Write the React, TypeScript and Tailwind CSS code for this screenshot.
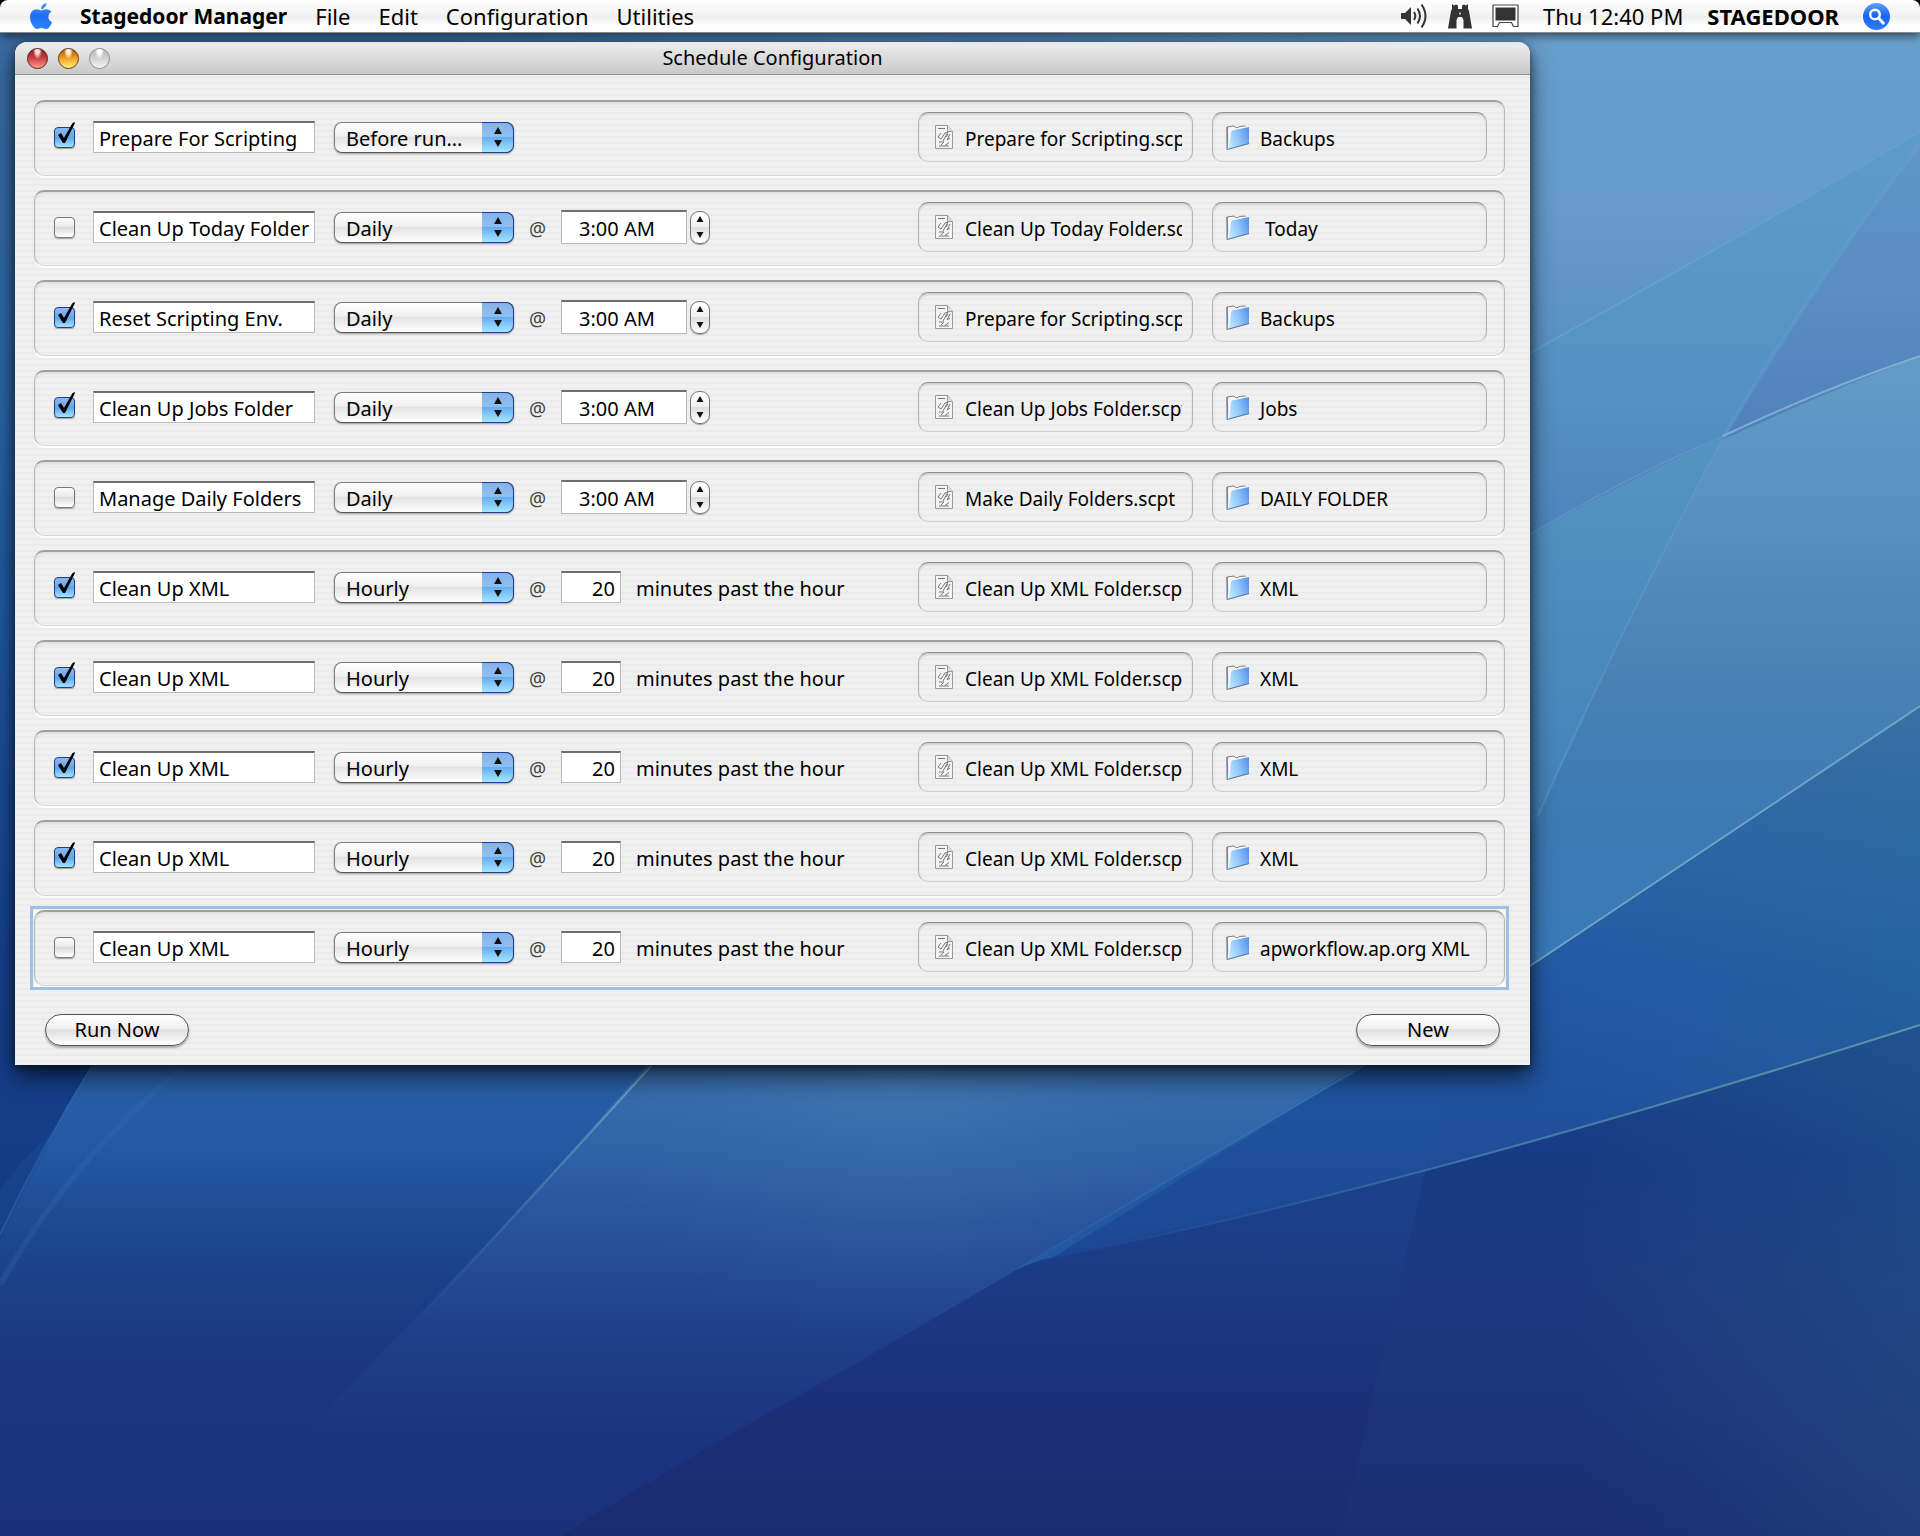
import { FaApple } from "react-icons/fa";

type Job = {
  enabled: boolean;
  name: string;
  when: "Before run…" | "Daily" | "Hourly";
  script: string;
  folder: string;
  indent?: boolean;
  focused?: boolean;
};

const jobs: ReadonlyArray<Job> = [
  { enabled: true, name: "Prepare For Scripting", when: "Before run…", script: "Prepare for Scripting.scpt", folder: "Backups" },
  { enabled: false, name: "Clean Up Today Folder", when: "Daily", script: "Clean Up Today Folder.scpt", folder: "Today", indent: true },
  { enabled: true, name: "Reset Scripting Env.", when: "Daily", script: "Prepare for Scripting.scpt", folder: "Backups" },
  { enabled: true, name: "Clean Up Jobs Folder", when: "Daily", script: "Clean Up Jobs Folder.scpt", folder: "Jobs" },
  { enabled: false, name: "Manage Daily Folders", when: "Daily", script: "Make Daily Folders.scpt", folder: "DAILY FOLDER" },
  { enabled: true, name: "Clean Up XML", when: "Hourly", script: "Clean Up XML Folder.scpt", folder: "XML" },
  { enabled: true, name: "Clean Up XML", when: "Hourly", script: "Clean Up XML Folder.scpt", folder: "XML" },
  { enabled: true, name: "Clean Up XML", when: "Hourly", script: "Clean Up XML Folder.scpt", folder: "XML" },
  { enabled: true, name: "Clean Up XML", when: "Hourly", script: "Clean Up XML Folder.scpt", folder: "XML" },
  { enabled: false, name: "Clean Up XML", when: "Hourly", script: "Clean Up XML Folder.scpt", folder: "apworkflow.ap.org XML", focused: true },
];

const menus = ["File", "Edit", "Configuration", "Utilities"];

// Vertical fades of the wallpaper: id, start y, end y, colour stops
const fades: ReadonlyArray<[string, number, number, string[]]> = [
  ["sky", 30, 540, ["#689fcc", "#669bca", "#5b8fc3", "#4f84bd"]],
  ["veil", 130, 540, ["#5f9bc8", "#5a97c6", "#5490c2", "#4f84bd"]],
  ["veilRight", 130, 440, ["#6096c8", "#5b8ec4", "#4f80bc"]],
  ["band", 356, 970, ["#619dc7", "#5892c0", "#4a83b4", "#3d7ab4", "#3a7aba"]],
  ["bandLeft", 430, 830, ["#5495c1", "#4c8bbd", "#4280b8"]],
  ["slope", 700, 1260, ["#3c6eaa", "#2c64a5", "#2259a4", "#20509c", "#1d448f"]],
  ["floor", 1030, 1536, ["#2459a0", "#1b438d", "#1c3a86", "#1c2f78", "#1b2b70"]],
  ["floorRight", 1030, 1536, ["#1c478c", "#173a85", "#1c397f", "#1d347a", "#1b2c72"]],
  ["left", 1050, 1536, ["#2a63ac", "#2458a2", "#1c468f", "#1b3883", "#1b347f", "#1b307a"]],
  ["middle", 1050, 1536, ["#3a72b0", "#3063a8", "#274f9a", "#1e3e8a", "#1b3480", "#1b307a"]],
  ["edge", 30, 1200, ["#3a6ba2", "#2f67a5", "#20569f", "#16438e", "#143a85"]],
];

function Wallpaper() {
  return (
    <svg
      className="absolute inset-0 h-full w-full"
      viewBox="0 0 1920 1536"
      preserveAspectRatio="xMidYMid slice"
      fill="none"
      aria-hidden="true"
    >
      <defs>
        {fades.map(([id, y1, y2, stops]) => (
          <linearGradient key={id} id={id} gradientUnits="userSpaceOnUse" x1="0" x2="0" y1={y1} y2={y2}>
            {stops.map((color, i) => (
              <stop key={i} offset={i / (stops.length - 1)} stopColor={color} />
            ))}
          </linearGradient>
        ))}
        <linearGradient id="strip" x1="0" x2="1" y1="0" y2="0">
          <stop offset=".14" stopColor="#3a6ba2" />
          <stop offset="1" stopColor="#3a6ba2" stopOpacity="0" />
        </linearGradient>
        <linearGradient id="ridge" gradientUnits="userSpaceOnUse" x1="1363" y1="1066" x2="900" y2="1340">
          <stop offset="0" stopColor="#3f97cf" stopOpacity=".6" />
          <stop offset="1" stopColor="#2c62b4" stopOpacity="0" />
        </linearGradient>
        <linearGradient id="crest" gradientUnits="userSpaceOnUse" x1="1920" y1="1020" x2="1041" y2="1260">
          <stop offset="0" stopColor="#5f97a8" />
          <stop offset=".5" stopColor="#3f76a6" />
          <stop offset="1" stopColor="#2558a2" stopOpacity="0" />
        </linearGradient>
        <linearGradient id="thread" gradientUnits="userSpaceOnUse" x1="651" y1="1066" x2="400" y2="1330">
          <stop offset="0" stopColor="#7fb5c5" stopOpacity=".8" />
          <stop offset=".5" stopColor="#4a7fb4" stopOpacity=".6" />
          <stop offset="1" stopColor="#2a559f" stopOpacity="0" />
        </linearGradient>
        <linearGradient id="teal" x1="0" x2="1" y1="0" y2="0">
          <stop offset=".3" stopColor="#2f7a94" stopOpacity="0" />
          <stop offset="1" stopColor="#2f7a94" stopOpacity=".22" />
        </linearGradient>
        <radialGradient id="glow" gradientUnits="userSpaceOnUse" cx="900" cy="1040" r="320">
          <stop offset="0" stopColor="#5a8fb4" stopOpacity=".3" />
          <stop offset="1" stopColor="#3a6fb0" stopOpacity="0" />
        </radialGradient>
      </defs>

      <path fill="#2459a0" d="M0 0h1920v1536H0z" />
      <path fill="url(#edge)" d="M0 0h200v1300H0z" />
      <path fill="url(#sky)" d="M200 0h1720v700H200z" />
      <path fill="url(#strip)" d="M200 0h1300v60H200z" />
      <path fill="url(#veil)" d="M1500 370Q1720 246 1920 131V800H1500z" />
      <path fill="url(#veilRight)" d="M1920 145Q1830 258 1723 438L1920 380z" />
      <path fill="url(#band)" d="M1480 560Q1723 432 1920 356V1100H1480z" />
      <path fill="url(#bandLeft)" d="M1480 560Q1610 490 1723 437Q1620 630 1538 816L1480 900z" />
      <path fill="url(#slope)" d="M1920 706Q1723 838 1530 966L1363 1066L1000 1290L1200 1400L1920 1200z" />
      <path fill="url(#floor)" d="M1920 1025Q1400 1190 1041 1260L780 1360L400 1536H1920z" />
      <path fill="url(#floorRight)" d="M1920 1025Q1660 1108 1426 1169L1340 1536H1920z" />
      <path fill="url(#left)" d="M0 1240Q40 1150 92 1064H651Q520 1210 306 1440L220 1536H0z" />
      <path
        fill="url(#middle)"
        d="M651 1060H1370Q1050 1250 857 1363Q700 1450 560 1536H200Q480 1260 651 1060z"
      />
      <path fill="url(#glow)" d="M651 1060H1370Q1050 1250 857 1363L500 1330Q580 1150 651 1060z" />
      <path fill="#1b59a8" opacity=".15" d="M1451 1066L1426 1168L1041 1260L1363 1066z" />
      <path fill="url(#teal)" d="M1426 1036L1530 966Q1723 838 1920 706V1536H1426z" />
      <path fill="#194a93" opacity=".6" d="M0 1190Q30 1150 55 1130L0 1240z" />

      <path stroke="#64a7d0" strokeOpacity=".7" strokeWidth="2" d="M1530 353Q1730 242 1920 132" />
      <path stroke="#6aa5d2" strokeOpacity=".3" strokeWidth="4" d="M1920 145Q1830 258 1723 438" />
      <path stroke="#67a3cd" strokeOpacity=".4" strokeWidth="2" d="M1723 438Q1620 630 1538 816" />
      <path stroke="#8cb8d6" strokeOpacity=".8" strokeWidth="2" d="M1723 436Q1820 390 1920 356" />
      <path stroke="#6aa3ce" strokeOpacity=".7" strokeWidth="1" d="M1530 534Q1630 475 1723 436" />
      <path stroke="#6ea6c4" strokeWidth="2" d="M1530 966Q1723 838 1920 706" />
      <path stroke="url(#ridge)" strokeWidth="2" d="M1370 1062Q1050 1250 857 1363" />
      <path stroke="url(#crest)" strokeWidth="2" d="M1920 1025Q1400 1190 1041 1260" />
      <path stroke="url(#thread)" strokeWidth="2" d="M651 1066Q480 1255 306 1440" />
      <path stroke="#3c77ba" strokeOpacity=".2" strokeWidth="6" d="M184 1066Q70 1160 0 1285" />
      <path stroke="#3b73b8" strokeOpacity=".4" strokeWidth="2" d="M92 1066Q40 1150 0 1235" />
    </svg>
  );
}

function SpeakerIcon() {
  return (
    <svg viewBox="0 0 27 26" className="h-[26px] w-[27px]" fill="none" stroke="#333" strokeWidth="2" aria-hidden="true">
      <path d="M0 10h4l6-6v18l-6-6H0z" fill="#333" stroke="none" />
      <path d="M13 9q2.600 4 0 8M16.500 5.500q5 7.500 0 15M20.500 1.500q8 11.500 0 23" />
    </svg>
  );
}

function BinocularsIcon() {
  return (
    <svg viewBox="0 0 24 25" className="h-[25px] w-6" fill="#333" aria-hidden="true">
      <path d="M4 0l2 1.500L8 .500l2 1V5h4V1.500l2-1 2 1L20 0v5l1 2 3 17.500h-8.500V16l-1.500-3h-4l-1.500 3v8.500H0L3 7l1-2z" />
      <path d="M11 8.500h2v2h-2z" fill="#bbb" />
    </svg>
  );
}

function DisplayIcon() {
  return (
    <svg viewBox="0 0 27 24" className="h-6 w-[27px]" aria-hidden="true">
      <path
        d="M1 1h25v21.500h-4.500l-2-4h-12l-2 4H1z"
        fill="#fff"
        stroke="#444"
        strokeWidth="1.200"
      />
      <path d="M3.500 3.500h20v13h-20z" fill="#333" />
    </svg>
  );
}

function SearchIcon() {
  return (
    <svg viewBox="0 0 27 27" className="h-[27px] w-[27px]" fill="none" aria-hidden="true">
      <defs>
        <linearGradient id="lens" x1="0" x2="0" y1="0" y2="1">
          <stop offset="0" stopColor="#5aa2ff" />
          <stop offset=".5" stopColor="#1a62f5" />
          <stop offset="1" stopColor="#2f7cff" />
        </linearGradient>
      </defs>
      <circle cx="13.500" cy="13.500" r="13.500" fill="url(#lens)" />
      <circle cx="12" cy="11.500" r="4.800" stroke="#fff" strokeWidth="2.400" />
      <path d="M15.500 15l4.800 5.200" stroke="#fff" strokeWidth="3" strokeLinecap="round" />
    </svg>
  );
}

function ScriptIcon() {
  return (
    <svg viewBox="0 0 18 24" className="h-6 w-[18px] shrink-0" fill="none" stroke="#777" aria-hidden="true">
      <path d="M.5.500h12l5 6v17H.5z" fill="#f4f4f4" stroke="#999" />
      <path d="M12.500.500v6h5" fill="#ddd" stroke="#999" />
      <path d="M3 3.500h7M6 8l-3 4 3 2 4-6 3-1-5 9M15 9l-3 6 3-2M4 17h5l-3 3M10 20.500l4-3M4 21h10M11 12l2-3" />
    </svg>
  );
}

function FolderIcon() {
  return (
    <svg viewBox="0 0 24 25" className="h-[25px] w-6 shrink-0" aria-hidden="true">
      <defs>
        <linearGradient id="folder" x1="0" x2="1" y1=".7" y2=".3">
          <stop offset="0" stopColor="#bfeaff" />
          <stop offset=".5" stopColor="#8fc6fb" />
          <stop offset="1" stopColor="#5b96e8" />
        </linearGradient>
      </defs>
      <path d="M1 2l7-1 2 2 4-1.500 5-.5 1 2v14L2 23z" fill="#f4f4f4" stroke="#8a8078" />
      <path d="M4.500 7q0-1.500 1.500-2L23 1.500v17.500L2 24.500z" fill="url(#folder)" />
      <path d="M2 24.500L4.500 7q0-1.500 1.500-2L23 1.500" fill="none" stroke="#fff" />
      <path d="M1 2v22.500l22-6" fill="none" stroke="#5d6f96" />
    </svg>
  );
}

function Arrows() {
  return (
    <svg viewBox="0 0 10 20" className="h-5 w-[10px]" fill="#111" aria-hidden="true">
      <path d="M5 0l4 7H1zM5 20l4-7H1z" />
    </svg>
  );
}

function MenuBar() {
  return (
    <header className="relative z-10 bg-black text-[22px]">
      <div className="flex h-[33px] items-center justify-between rounded-t-lg border-b border-[#8b8b8b] bg-[linear-gradient(#fff,#f3f3f3_48%,#ececec_50%,#fff_80%)] pr-[30px] pl-[26px] shadow-[0_3px_10px_rgba(0,0,0,0.55)]">
        <nav className="flex items-center gap-7">
          <svg className="absolute h-0 w-0" aria-hidden="true">
            <linearGradient id="aqua" x1="0" x2="0" y1="0" y2="1">
              <stop offset="0" stopColor="#4f9bff" />
              <stop offset=".5" stopColor="#1d6cf6" />
              <stop offset="1" stopColor="#2c86ff" />
            </linearGradient>
          </svg>
          <a href="#apple" aria-label="Apple menu" className="-mr-1">
            <FaApple size={30} fill="url(#aqua)" />
          </a>
          <a href="#app" className="text-[21px] font-bold">
            Stagedoor Manager
          </a>
          {menus.map((menu) => (
            <a key={menu} href={`#${menu.toLowerCase()}`}>
              {menu}
            </a>
          ))}
        </nav>
        <div className="flex items-center gap-6">
          <div className="flex items-center gap-5">
            <SpeakerIcon />
            <BinocularsIcon />
            <DisplayIcon />
          </div>
          <span>Thu 12:40 PM</span>
          <a href="#user" className="font-bold">
            STAGEDOOR
          </a>
          <button type="button" aria-label="Search">
            <SearchIcon />
          </button>
        </div>
      </div>
    </header>
  );
}

function TitleBar() {
  return (
    <div className="grid h-[33px] grid-cols-[1fr_auto_1fr] items-center rounded-t-xl border-b border-[#8f8f8f] bg-[linear-gradient(#f2f2f2,#e2e2e2_30%,#c9c9c9)] px-3">
      <div className="flex gap-[10px]">
        <button
          type="button"
          aria-label="Close"
          className="size-[21px] rounded-full border border-[#5d1a1a] bg-[radial-gradient(ellipse_at_50%_10%,#f8d8d8_0_14%,transparent_34%),linear-gradient(#7d1d1d,#c93a3a_45%,#ff9b91)]"
        />
        <button
          type="button"
          aria-label="Minimize"
          className="size-[21px] rounded-full border border-[#6b3a10] bg-[radial-gradient(ellipse_at_50%_10%,#fff0d0_0_14%,transparent_34%),linear-gradient(#a34a10,#f09a20_45%,#fff27a)]"
        />
        <button
          type="button"
          aria-label="Zoom"
          className="size-[21px] rounded-full border border-[#8d8d8d] bg-[radial-gradient(ellipse_at_50%_10%,#fff_0_14%,transparent_34%),linear-gradient(#b5b5b5,#cfcfcf_45%,#f4f4f4)]"
        />
      </div>
      <h1>Schedule Configuration</h1>
    </div>
  );
}

const field =
  "border border-[#b9b9b9] border-t-2 border-t-[#6e6e6e] bg-white pt-0.5 outline-none";

const well =
  "flex h-[50px] w-[275px] shrink-0 items-center rounded-[10px] border border-[#b4b4b4] border-t-[#8f8f8f] border-b-[#cfcfcf] text-[19px] shadow-[inset_0_2px_2px_rgba(0,0,0,0.12)]";

function JobRow({ job, index }: { job: Job; index: number }) {
  return (
    <li
      className={
        job.focused
          ? "bg-white/80 shadow-[0_2px_0_#fff] outline-3 outline-offset-1 outline-[#9fc1e8]"
          : "rounded-[10px] shadow-[0_2px_0_#fcfcfc]"
      }
    >
      <div className="flex items-center rounded-[10px] border border-[#b8b8b8] border-t-2 border-t-[#a0a0a0] border-b-[#d6d6d6] bg-[repeating-linear-gradient(#f0f0f0_0_4px,#ebebeb_4px_6px)] pt-[10px] pr-[17px] pb-[13px] pl-[19px] shadow-[inset_0_2px_3px_rgba(0,0,0,0.08)]">
        <span className="relative mr-[18px] size-[21px] shrink-0">
          <input
            type="checkbox"
            defaultChecked={job.enabled}
            aria-label={`Enable ${job.name}`}
            className="peer block size-[21px] appearance-none rounded-sm border border-[#777] bg-[linear-gradient(#fdfdfd,#e9e9e9_48%,#dcdcdc_50%,#fff)] shadow-[0_1px_1px_rgba(0,0,0,0.3)] checked:border-[#1c3f8f] checked:bg-[linear-gradient(#8db9ee,#6ba8ec_48%,#5aa4ee_50%,#a8e4ff)]"
          />
          <svg
            viewBox="0 0 21 24"
            className="pointer-events-none absolute bottom-[2px] left-0 hidden h-6 w-[21px] peer-checked:block"
            aria-hidden="true"
          >
            <path d="M4 13l3-2 3 5L18.500 1l3-1L11 21H9z" fill="#000" />
          </svg>
        </span>
        <input
          type="text"
          defaultValue={job.name}
          aria-label={`Name of job ${index + 1}`}
          className={`${field} mr-[19px] h-8 w-[222px] shrink-0 pl-[5px]`}
        />
        <span className="relative flex shrink-0">
          <select
            defaultValue={job.when}
            aria-label={`Frequency of job ${index + 1}`}
            className="h-[31px] w-[180px] appearance-none rounded-lg border border-[#7c7c7c] border-b-[#555] bg-[linear-gradient(#fff,#f0f0f0_45%,#e3e3e3_50%,#fff)] pt-1 pl-[11px] shadow-[0_1px_2px_rgba(0,0,0,0.35)] outline-none"
          >
            <option>Before run…</option>
            <option>Daily</option>
            <option>Hourly</option>
          </select>
          <span className="pointer-events-none absolute inset-y-0 right-0 flex w-8 items-center justify-center rounded-r-lg border border-l-0 border-[#1d3f8e] bg-[linear-gradient(#86b1e8,#8fc0f2_46%,#66aef2_50%,#a5e6ff)]">
            <Arrows />
          </span>
        </span>
        {job.when !== "Before run…" && <span className="mx-[15px] w-[17px] pt-1 text-[19px] text-[#444]">@</span>}
        {job.when === "Daily" && (
          <>
            <input
              type="text"
              defaultValue="3:00 AM"
              aria-label={`Time of job ${index + 1}`}
              className={`${field} mr-[3px] h-[34px] w-[126px] shrink-0 pl-[17px]`}
            />
            <button
              type="button"
              aria-label="Change time"
              className="flex h-[33px] w-5 shrink-0 items-center justify-center rounded-[9px] border border-[#777] bg-[linear-gradient(#fff,#f0f0f0_48%,#dedede_50%,#fff)] shadow-[0_1px_1px_rgba(0,0,0,0.3)]"
            >
              <svg viewBox="0 0 8 22" className="h-[22px] w-2" fill="#111" aria-hidden="true">
                <path d="M4 0l3.500 6h-7zM4 22l3.500-6h-7z" />
              </svg>
            </button>
          </>
        )}
        {job.when === "Hourly" && (
          <label className="flex items-center gap-[15px] whitespace-nowrap">
            <input
              type="text"
              defaultValue="20"
              className={`${field} h-8 w-[60px] pr-[5px] text-right`}
            />
            <span className="pt-1">minutes past the hour</span>
          </label>
        )}
        <div className="ml-auto flex gap-[19px]">
          <div className={`${well} gap-3 pr-[10px] pl-4`}>
            <ScriptIcon />
            <span className="min-w-0 flex-1 overflow-hidden pt-1 whitespace-nowrap">{job.script}</span>
          </div>
          <div className={`${well} gap-[10px] pr-[10px] pl-[13px]`}>
            <FolderIcon />
            <span className={job.indent ? "pt-1 pl-[5px] whitespace-nowrap" : "pt-1 whitespace-nowrap"}>
              {job.folder}
            </span>
          </div>
        </div>
      </div>
    </li>
  );
}

function PushButton({ label }: { label: string }) {
  return (
    <button
      type="button"
      className="h-8 w-36 rounded-full border border-[#555] bg-[linear-gradient(#fff,#f0f0f0_45%,#dfdfdf_50%,#fff)] shadow-[0_2px_2px_rgba(0,0,0,0.3)]"
    >
      {label}
    </button>
  );
}

export default function App() {
  return (
    <div className="relative min-h-screen overflow-hidden font-['Noto_Sans',sans-serif] text-[20px] leading-6 text-black">
      <Wallpaper />
      <MenuBar />
      <main className="relative pt-[9px] pr-[390px] pl-[15px]">
        <section className="rounded-t-xl bg-[repeating-linear-gradient(#f0f0f0_0_4px,#ebebeb_4px_6px)] shadow-[0_12px_24px_rgba(0,0,0,0.6),0_2px_8px_rgba(0,0,0,0.5)]">
          <TitleBar />
          <ul className="flex flex-col gap-[14px] pt-[25px] pr-[25px] pl-[19px]">
            {jobs.map((job, index) => (
              <JobRow key={index} job={job} index={index} />
            ))}
          </ul>
          <div className="flex justify-between pt-7 pr-[30px] pb-[19px] pl-[30px]">
            <PushButton label="Run Now" />
            <PushButton label="New" />
          </div>
        </section>
      </main>
    </div>
  );
}
